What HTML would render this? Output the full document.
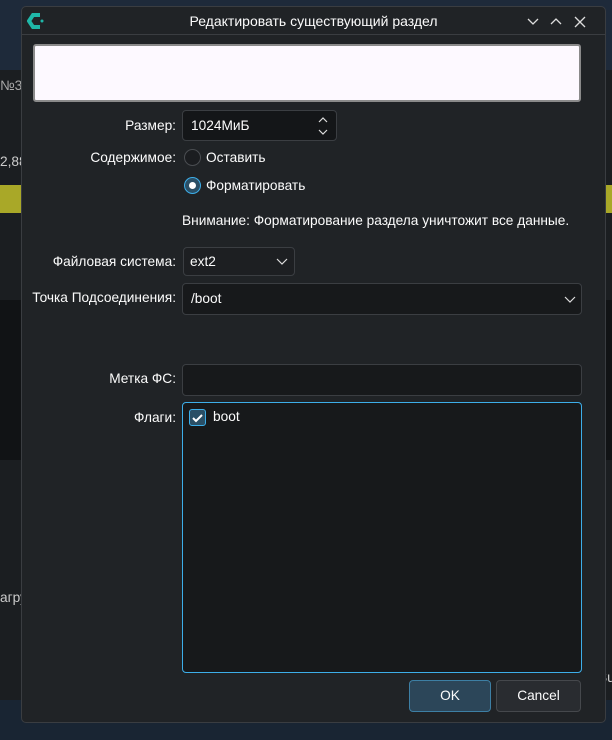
<!DOCTYPE html>
<html><head><meta charset="utf-8"><style>
*{box-sizing:border-box;margin:0;padding:0}
body{width:612px;height:740px;background:#1b1e21;position:relative;overflow:hidden;font-family:"Liberation Sans","DejaVu Sans",sans-serif;font-size:13.7px;color:#fcfcfc}
.a{position:absolute}
.dlg{left:21px;top:6px;width:585px;height:717px;background:#202326;border:1px solid #3a3d41;border-radius:5px}
.lbl{position:absolute;text-align:right;width:170px;left:6px}
.inp{position:absolute;background:#141618;border:1px solid #3b3e42;border-radius:4px}
.t{position:absolute;white-space:nowrap}
</style></head><body>
<div class="a" style="left:0;top:0;width:612px;height:70px;background:#1e2a3a"></div>
<div class="a" style="left:0;top:185px;width:612px;height:28px;background:#a9a828"></div>
<div class="a" style="left:0;top:300px;width:612px;height:160px;background:#111315"></div>
<div class="a" style="left:0;top:700px;width:612px;height:40px;background:#192533"></div>
<div class="t" style="left:0;top:78px;color:#aaa">№3</div>
<div class="t" style="left:0;top:154px;color:#ccc">2,88</div>
<div class="t" style="left:0;top:590px;color:#ccc">агру</div>
<div class="t" style="left:598px;top:670px;color:#ccc">Su</div>

<div class="a dlg">
 <div class="a" style="left:0;top:27px;width:583px;height:1px;background:#3a3d41"></div>
 <svg class="a" style="left:5px;top:5px" width="18" height="18" viewBox="0 0 18 18"><path d="M13 3 L6 3 L2 9 L6 15 L13 15" stroke="#1fb7a8" stroke-width="4" fill="none"/><circle cx="15" cy="9" r="1.5" fill="#1fb7a8"/></svg>
 <div class="t" style="left:0;width:583px;text-align:center;top:6px;font-size:14px">Редактировать существующий раздел</div>
 <svg class="a" style="left:503px;top:8px" width="70" height="14"><path d="M3 4l5 5 5-5M26 9l5-5 5 5M50 2l10 10M60 2l-10 10" stroke="#ddd" stroke-width="1.3" fill="none"/></svg>
</div>

<div class="a" style="left:33px;top:44px;width:548px;height:58px;background:#fdf9ff;border:2px solid #8a8a8a;border-radius:3px"></div>

<div class="lbl" style="top:118px">Размер:</div>
<div class="inp" style="left:182px;top:110px;width:155px;height:31px"><span class="t" style="left:8px;top:7px">1024МиБ</span>
<svg class="a" style="left:134px;top:4px" width="12" height="22"><path d="M2 7l4-4 4 4M2 15l4 4 4-4" stroke="#ddd" stroke-width="1.2" fill="none"/></svg></div>

<div class="lbl" style="top:150px">Содержимое:</div>
<div class="a" style="left:184px;top:149px;width:17px;height:17px;border-radius:50%;border:1px solid #4a4d51;background:#1b1d20"></div>
<div class="t" style="left:206px;top:150px">Оставить</div>
<div class="a" style="left:184px;top:177px;width:17px;height:17px;border-radius:50%;border:1px solid #3daee9;background:#2a4f66"></div>
<div class="a" style="left:189px;top:182px;width:7px;height:7px;border-radius:50%;background:#fff"></div>
<div class="t" style="left:206px;top:178px">Форматировать</div>

<div class="t" style="left:182px;top:213px">Внимание: Форматирование раздела уничтожит все данные.</div>

<div class="lbl" style="top:254px">Файловая система:</div>
<div class="inp" style="left:183px;top:247px;width:112px;height:29px;background:#1d1f22"><span class="t" style="left:6px;top:6px">ext2</span>
<svg class="a" style="left:92px;top:10px" width="12" height="8"><path d="M1 1l5 5 5-5" stroke="#ddd" stroke-width="1.2" fill="none"/></svg></div>

<div class="lbl" style="top:290px;left:0;width:176px">Точка Подсоединения:</div>
<div class="inp" style="left:182px;top:283px;width:400px;height:32px;background:#17191b"><span class="t" style="left:8px;top:7px">/boot</span>
<svg class="a" style="left:381px;top:12px" width="12" height="8"><path d="M1 1l5 5 5-5" stroke="#ddd" stroke-width="1.2" fill="none"/></svg></div>

<div class="lbl" style="top:371px">Метка ФС:</div>
<div class="inp" style="left:182px;top:364px;width:400px;height:32px;background:#17191b"></div>

<div class="lbl" style="top:410px">Флаги:</div>
<div class="inp" style="left:182px;top:402px;width:400px;height:271px;background:#17191b;border-color:#3daee9"></div>
<div class="a" style="left:189px;top:409px;width:17px;height:17px;border-radius:3px;border:1px solid #3daee9;background:#2a4f66"></div>
<svg class="a" style="left:189px;top:409px" width="17" height="17"><path d="M4 9l3 3 6-6" stroke="#fff" stroke-width="2" fill="none"/></svg>
<div class="t" style="left:213px;top:409px">boot</div>

<div class="a" style="left:409px;top:680px;width:82px;height:32px;background:#2c4659;border:1px solid #3d7fa4;border-radius:4px;text-align:center;line-height:30px">OK</div>
<div class="a" style="left:496px;top:680px;width:85px;height:32px;background:#292c30;border:1px solid #45484c;border-radius:4px;text-align:center;line-height:30px">Cancel</div>
</body></html>
